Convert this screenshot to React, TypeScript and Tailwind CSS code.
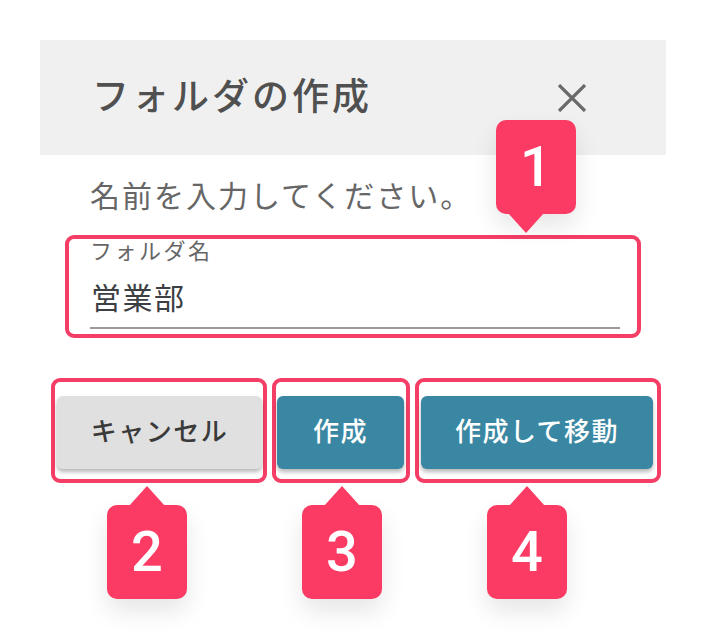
import React from "react";

const FONT = { fontFamily: '"Roboto", "Noto Sans CJK JP", sans-serif' };

function Badge({ n, className, down }: { n: string; className: string; down?: boolean }) {
    return (
        <div className={`absolute w-[80px] ${className}`}>
            {!down && (
                <svg width="36" height="20" viewBox="0 0 36 20" className="block mx-auto -mb-px">
                    <path d="M18 0 L36 20 L0 20 Z" fill="#fb3b64" />
                </svg>
            )}
            <div className="h-[94px] rounded-[10px] bg-[#fb3b64] flex items-center justify-center text-white font-medium text-[56px] leading-none shadow-[0_12px_24px_rgba(0,0,0,0.10)]">
                {n}
            </div>
            {down && (
                <svg width="36" height="20" viewBox="0 0 36 20" className="block -mt-px ml-[12px]">
                    <path d="M0 0 L36 0 L18 20 Z" fill="#fb3b64" />
                </svg>
            )}
        </div>
    );
}

export default function App() {
    return (
        <div className="relative w-[706px] h-[640px] bg-white overflow-hidden" style={FONT}>
            <div className="ml-[40px] pt-[40px] w-[626px]">
                {/* Dialog */}
                <div className="bg-white">
                    <div className="h-[115px] bg-[#f0f0f0] flex items-center justify-between pl-[52px] pr-[79px]">
                        <h1 className="text-[37px] font-medium tracking-[3px] text-[#505050] leading-none">
                            フォルダの作成
                        </h1>
                        <svg width="30" height="28" viewBox="0 0 30 28">
                            <path d="M2 1 L28 27 M28 1 L2 27" stroke="#6a6a6a" strokeWidth="3.2" />
                        </svg>
                    </div>

                    <div className="pt-[23px]">
                        <p className="pl-[50px] text-[30px] leading-[38px] tracking-[2px] text-[#666]">
                            名前を入力してください。
                        </p>

                        <div className="mt-[19px] ml-[25px] w-[576px] h-[103px] border-4 border-[#f43e66] rounded-[9px] pl-[21px] pr-[17px]">
                            <div className="text-[22px] leading-[26px] tracking-[2.5px] text-[#666]">フォルダ名</div>
                            <div className="mt-[15px] text-[30px] leading-[38px] tracking-[1.5px] text-[#3c4043] pl-[1px]">
                                営業部
                            </div>
                            <div className="mt-[9px] h-[2px] bg-[#9a9a9a]" />
                        </div>

                        <div className="mt-[40px] ml-[11px] flex gap-[5px] pb-[1px]">
                            <div className="w-[216px] h-[105px] border-4 border-[#f43e66] rounded-[9px] pt-[14px] pl-[2px] pr-[1px]">
                                <button className="w-full h-[73px] rounded-[6px] bg-[#e0e0e0] text-[#3a3a3a] text-[26px] font-medium tracking-[1.5px] shadow-[0_3px_4px_rgba(0,0,0,0.28)]">
                                    キャンセル
                                </button>
                            </div>
                            <div className="w-[138px] h-[105px] border-4 border-[#f43e66] rounded-[9px] pt-[14px] pl-[1px] pr-[2px]">
                                <button className="w-full h-[73px] rounded-[6px] bg-[#3a87a3] text-white text-[26px] font-medium tracking-[1.5px] shadow-[0_3px_4px_rgba(0,0,0,0.28)]">
                                    作成
                                </button>
                            </div>
                            <div className="w-[246px] h-[105px] border-4 border-[#f43e66] rounded-[9px] pt-[14px] pl-[2px] pr-[4px]">
                                <button className="w-full h-[73px] rounded-[6px] bg-[#3a87a3] text-white text-[26px] font-medium tracking-[1.5px] shadow-[0_3px_4px_rgba(0,0,0,0.28)]">
                                    作成して移動
                                </button>
                            </div>
                        </div>
                    </div>
                </div>
            </div>

            <Badge n="1" down className="left-[496px] top-[120px]" />
            <Badge n="2" className="left-[107px] top-[486px]" />
            <Badge n="3" className="left-[302px] top-[486px]" />
            <Badge n="4" className="left-[487px] top-[486px]" />
        </div>
    );
}
